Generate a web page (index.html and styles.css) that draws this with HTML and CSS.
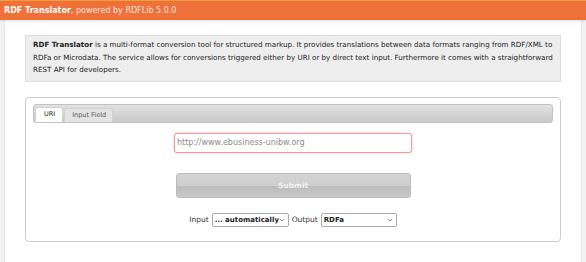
FILE: index.html
```html
<!DOCTYPE html>
<html lang="en">
<head>
    <meta charset="UTF-8">
    <title>RDF Translator</title>
    <link rel="stylesheet" href="styles.css">
</head>
<body>
    <div class="topbar">
        <span class="brand">RDF Translator</span>, powered by RDFLib 5.0.0
    </div>

    <div class="page">
        <div class="intro">
            <b>RDF Translator</b> is a multi-format conversion tool for structured markup. It provides translations between data formats ranging from RDF/XML to
            RDFa or Microdata. The service allows for conversions triggered either by URI or by direct text input. Furthermore it comes with a straightforward
            REST API for developers.
        </div>

        <div class="panel">
            <div class="tabbar">
                <span class="tab active">URI</span>
                <span class="tab">Input Field</span>
            </div>

            <div class="uri-row">
                <input type="text" class="uri-input" placeholder="http://www.ebusiness-unibw.org">
            </div>

            <div class="submit-row">
                <button class="submit">Submit</button>
            </div>

            <div class="format-row">
                <span>Input</span>
                <span class="select-box fmt-in">
                    <select>
                        <option>... automatically</option>
                    </select>
                    <svg class="chev" viewBox="0 0 8 5"><path d="M1 1l3 3 3-3" /></svg>
                </span>
                <span>Output</span>
                <span class="select-box fmt-out">
                    <select>
                        <option>RDFa</option>
                    </select>
                    <svg class="chev" viewBox="0 0 8 5"><path d="M1 1l3 3 3-3" /></svg>
                </span>
            </div>
        </div>
    </div>
</body>
</html>
```

FILE: styles.css
```css
html, body {
    margin: 0;
    height: 100%;
}

body {
    background: #f2f2f2;
    font-family: "DejaVu Sans", Verdana, sans-serif;
    color: #222;
    overflow: hidden;
}

/* Orange bar on top */
.topbar {
    height: 19px;
    line-height: 19px;
    border-top: 1px solid #e9a23b;
    background: #f0703a;
    color: rgba(255, 255, 255, 0.85);
    font-size: 8px;
    padding-left: 4px;
    box-shadow: 0 1px 2px rgba(0, 0, 0, 0.12);
    position: relative;
}

.topbar .brand {
    color: #fff;
    font-weight: bold;
}

.page {
    margin: 0 4px;
    background: #fff;
    border-left: 1px solid #e6e6e6;
    border-right: 1px solid #e6e6e6;
    padding: 15px 20px 20px;
    min-height: calc(100% - 20px);
    box-sizing: border-box;
}

.intro {
    background: #eeeeee;
    border: 1px solid #dddddd;
    padding: 3px 7px 4px;
    font-size: 7.15px;
    line-height: 12.5px;
    color: #222;
}

.panel {
    margin-top: 15px;
    border: 1px solid #cccccc;
    border-radius: 4px;
    padding: 6px 7px 14px;
}

/* tabs */
.tabbar {
    height: 17px;
    border: 1px solid #c2c2c2;
    border-radius: 3px;
    background: linear-gradient(#e2e2e2, #c9c9c9);
    display: flex;
    align-items: flex-end;
    padding-left: 1px;
    gap: 1px;
}

.tab {
    height: 13px;
    line-height: 13px;
    padding: 0 6px 0 7px;
    font-size: 6.5px;
    color: #555;
    background: #e4e4e4;
    border: 1px solid #d0d0d0;
    border-bottom: none;
    border-radius: 3px 3px 0 0;
}

.tab.active {
    background: #fff;
    color: #222;
    height: 14px;
    padding: 0 7px 0 8px;
}

.uri-row,
.submit-row,
.format-row {
    display: flex;
    justify-content: center;
}

.uri-row {
    margin-top: 10px;
}

.uri-input {
    width: 238px;
    height: 20px;
    box-sizing: border-box;
    border: 1px solid #f59a9a;
    border-radius: 3px;
    box-shadow: 0 0 2px rgba(240, 100, 100, 0.5);
    font-family: "DejaVu Sans", Verdana, sans-serif;
    font-size: 8px;
    padding: 0 2px;
    outline: none;
}

.uri-input::placeholder {
    color: #8a8a8a;
}

.submit-row {
    margin-top: 20px;
}

.submit {
    width: 235px;
    height: 25px;
    border: 1px solid #bdbdbd;
    border-radius: 3px;
    background: linear-gradient(#d4d4d4 0%, #cfcfcf 50%, #bdbdbd 51%, #c8c8c8 100%);
    color: #f4f4f4;
    font-family: "DejaVu Sans", Verdana, sans-serif;
    font-size: 7.5px;
    font-weight: bold;
}

.format-row {
    margin-top: 15px;
    align-items: center;
    gap: 3px;
    font-size: 7.5px;
    color: #333;
    height: 14px;
}

/* select with its own chevron */
.select-box {
    position: relative;
    height: 14px;
    box-sizing: border-box;
    border: 1px solid #a9a9a9;
    border-radius: 2px;
    background: #fff;
    display: flex;
    align-items: center;
}

.select-box select {
    appearance: none;
    -webkit-appearance: none;
    border: none;
    background: transparent;
    width: 100%;
    height: 12px;
    padding: 0 0 0 2px;
    font-family: "DejaVu Sans", Verdana, sans-serif;
    font-size: 7px;
    font-weight: bold;
    color: #222;
    outline: none;
}

.chev {
    position: absolute;
    right: 3px;
    top: 4px;
    width: 6px;
    height: 4px;
    fill: none;
    stroke: #555;
    stroke-width: 1;
}

.fmt-in {
    width: 77px;
}

.fmt-out {
    width: 76px;
}
```
